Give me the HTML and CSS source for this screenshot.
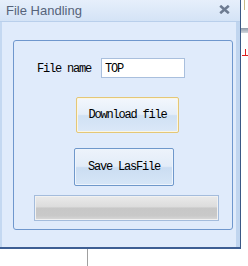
FILE: index.html
```html
<!DOCTYPE html>
<html lang="en">
<head>
  <meta charset="UTF-8">
  <title>File Handling</title>
  <link rel="stylesheet" href="styles.css">
</head>
<body>
  <div class="desk">
    <div class="window">
      <div class="titlebar">
        <span class="title">File Handling</span>
        <svg class="close" width="11" height="9" viewBox="0 0 11 9">
          <path d="M1.2 0.8 L9.8 8.2 M9.8 0.8 L1.2 8.2" stroke="#6d7b91" stroke-width="2.6" fill="none"/>
        </svg>
      </div>
      <div class="body">
        <div class="group">
          <div class="name-row">
            <label for="fileName">File name</label>
            <input type="text" id="fileName" value="TOP">
          </div>
          <button class="btn btn-download">Download file</button>
          <button class="btn btn-save">Save LasFile</button>
          <div class="progress"><div class="progress-fill"></div></div>
        </div>
      </div>
    </div>
    <div class="side">
      <div class="side-top"></div>
      <div class="side-bar"></div>
      <div class="side-mark"></div>
    </div>
  </div>
  <div class="below"></div>
</body>
</html>
```

FILE: styles.css
```css
body {
  margin: 0;
  background: #fff;
  width: 248px;
  height: 266px;
  overflow: hidden;
}

.desk {
  display: flex;
}

.window {
  width: 240px;
  height: 247px;
  border-right: 1px solid #3a5886;
  border-bottom: 2px solid #3d5e93;
  background: #e0ebfb;
  display: flex;
  flex-direction: column;
}

.titlebar {
  height: 22px;
  box-sizing: border-box;
  border-bottom: 1px solid #b9cfeb;
  background: linear-gradient(#e6effb, #d4e3f6);
  display: flex;
  align-items: center;
  justify-content: space-between;
  padding: 0 10px 1px 6px;
}

.title {
  font-family: "Liberation Sans", Arial, sans-serif;
  font-size: 13px;
  color: #56637a;
}

.close {
  margin-top: -1px;
}

.body {
  flex: 1;
  border-left: 2px solid #c4d8f1;
  border-right: 4px solid #c0d5ef;
  padding: 18px 0 0 11px;
}

.group {
  width: 218px;
  height: 188px;
  border: 1px solid #6f97cd;
  border-radius: 3px;
  display: flex;
  flex-direction: column;
  align-items: flex-start;
}

.name-row {
  display: flex;
  align-items: center;
  margin: 17px 0 0 23px;
}

label,
input,
.btn {
  font-family: "Liberation Mono", "Courier New", monospace;
  font-size: 12px;
  letter-spacing: -1.2px;
  color: #000;
}

label {
  width: 64px;
  padding-top: 2px;
}

input {
  width: 84px;
  height: 20px;
  box-sizing: border-box;
  border: 1px solid #a9bfdd;
  background: #fff;
  padding: 1px 3px 0;
  outline: none;
}

.btn {
  box-sizing: border-box;
  border-radius: 2px;
  padding: 0;
  cursor: pointer;
}

.btn-download {
  width: 103px;
  height: 36px;
  margin: 19px 0 0 62px;
  border: 1px solid #e4c777;
  box-shadow: inset 0 0 0 1px #fbf6e4;
  background: linear-gradient(#f3f7fd 0%, #e5eef9 48%, #d0e1f4 52%, #dbe8f8 100%);
}

.btn-save {
  width: 100px;
  height: 38px;
  margin: 15px 0 0 60px;
  border: 1px solid #6f98cb;
  box-shadow: inset 0 0 0 1px #eef4fc;
  background: linear-gradient(#edf3fb 0%, #e2ecf8 48%, #cbddf2 52%, #d6e6f7 100%);
}

.progress {
  width: 185px;
  height: 26px;
  box-sizing: border-box;
  margin: 9px 0 0 20px;
  border: 1px solid #a4bcdc;
  padding: 1px;
  background: #f1f1f1;
}

.progress-fill {
  height: 100%;
  background: linear-gradient(#e9e9e9 0%, #dcdcdc 45%, #c7c7c7 50%, #c9c9c9 85%, #d6d6d6 100%);
}

.side {
  width: 7px;
  display: flex;
  flex-direction: column;
}

.side-top {
  height: 10px;
  margin-bottom: 18px;
  border-left: 3px solid #fff;
  box-shadow: inset 1px 0 0 #c9b98a;
}

.side-bar {
  height: 5px;
  background: linear-gradient(#8f99a8, #d3d7dd);
}

.side-mark {
  width: 6px;
  height: 6px;
  margin: 16px 0 0 1px;
  border-bottom: 1px solid #e02020;
  background: linear-gradient(90deg, transparent 3px, #e02020 3px, #e02020 4px, transparent 4px);
}

.below {
  width: 1px;
  height: 17px;
  margin-left: 87px;
  background: #a0a0a0;
}
```
